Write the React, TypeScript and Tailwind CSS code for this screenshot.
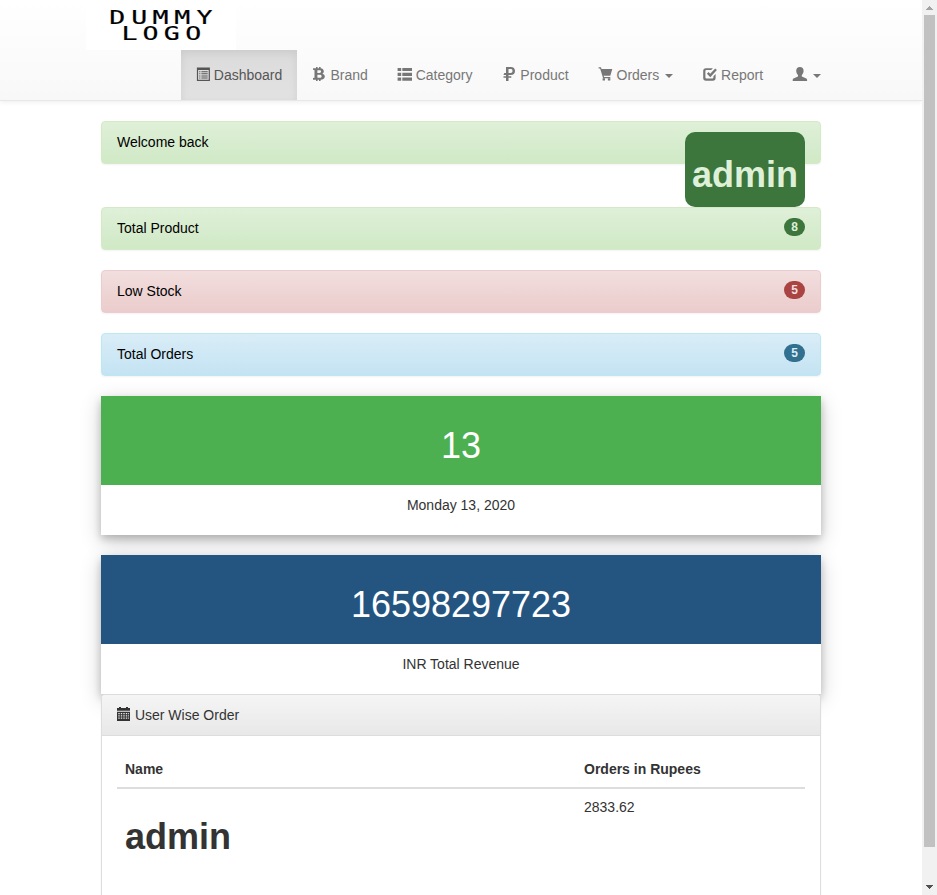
import type { ReactNode } from "react";

function Icon({ children, view = "0 0 15 14" }: { children: ReactNode; view?: string }) {
  return (
    <svg width="15" height="14" viewBox={view} fill="currentColor" className="-mt-0.5 -mr-px shrink-0 overflow-visible">
      {children}
    </svg>
  );
}

const ListAlt = () => (
  <Icon view="0.1 -0.4 15 14">
    <path fillRule="evenodd" d="M1 0H14V13.6H1ZM2.2 2.5V12.4H12.8V2.5Z" />
    <path d="M3.3 3.8h1.2v1H3.3zM5.5 3.8h6.3v1H5.5zM3.3 5.9h1.2v1H3.3zM5.5 5.9h6.3v1H5.5zM3.3 8h1.2v1H3.3zM5.5 8h6.3v1H5.5zM3.3 10.1h1.2v1H3.3zM5.5 10.1h6.3v1H5.5z" />
  </Icon>
);

const Bitcoin = () => (
  <Icon view="1 0 15 14">
    <path
      fillRule="evenodd"
      d="M1 1.2H4V0H5.6V1.2H7V0H8.6V1.3C10.6 1.6 11.8 2.7 11.8 4.3C11.8 5.4 11.3 6.2 10.4 6.7C11.9 7.2 12.8 8.1 12.8 9.5C12.8 11.4 11.3 12.6 8.6 12.7V14H7V12.7H5.6V14H4V12.7H1V11.1L2.5 10.7V3.2L1 2.8ZM5.4 3.3V5.9H7.4C8.5 5.9 9.1 5.4 9.1 4.6C9.1 3.7 8.5 3.3 7.4 3.3ZM5.4 7.7V10.7H7.7C8.9 10.7 9.6 10.2 9.6 9.2C9.6 8.2 8.9 7.7 7.7 7.7Z"
    />
  </Icon>
);

const ThList = () => (
  <Icon view="0.8 0 15 14">
    <path d="M.4 1h3.6v3H.4zM5.1 1h9.7v3H5.1zM.4 5.7h3.6v3.2H.4zM5.1 5.7h9.7v3.2H5.1zM.4 10.5h3.6v3.3H.4zM5.1 10.5h9.7v3.3H5.1z" />
  </Icon>
);

const Ruble = () => (
  <Icon view="-0.3 0 15 14">
    <path
      fillRule="evenodd"
      d="M3.7 0H8.5C11.2 0 12.7 1.4 12.7 3.9C12.7 6.5 11.2 8 8.4 8H6.2V9.2H9V10.8H6.2V14H3.7V10.8H1.2V9.2H3.7V8H1.2L2 6.1H3.7ZM6.2 2.1V6.1H8.2C9.6 6.1 10.2 5.4 10.2 4.1C10.2 2.7 9.6 2.1 8.2 2.1Z"
    />
  </Icon>
);

const Cart = () => (
  <Icon view="0.7 -0.2 15 14">
    <path d="M.3 0H2.6L3.3 1.9H14L12 8.5H5.3L5.8 9.9H12V11.1H4.8L1.8 1.2H.3Z" />
    <path d="M4.3 11h2.4v2.3H4.3zM9.6 11H12v2.3H9.6z" />
  </Icon>
);

const Check = () => (
  <Icon view="0.4 -0.2 15 14">
    <path d="M3.4 1H10.3L8.6 2.9H3.8Q2.8 2.9 2.8 3.9V10.2Q2.8 11.2 3.8 11.2H9.8Q10.8 11.2 10.8 10.2V9L13 6.9V10.8Q13 13.6 10.2 13.6H3.4Q.6 13.6 .6 10.8V3.7Q.6 1 3.4 1Z" />
    <path d="M4.3 6.5L6 4.9L7.6 6.5L12.6 1.2L14.3 2.8L7.7 10.1Z" />
  </Icon>
);

const User = () => (
  <Icon view="0.6 0 15 14">
    <path d="M7.5 0C9.8 0 11.2 1.5 11.2 3.7C11.2 5.5 10.4 7 9.4 7.9V9C9.4 9.4 9.6 9.6 10 9.8L13.4 11.3C14.3 11.7 14.7 12.2 14.7 13V13.9H.3V13C.3 12.2.7 11.7 1.6 11.3L5 9.8C5.4 9.6 5.6 9.4 5.6 9V7.9C4.6 7 3.8 5.5 3.8 3.7C3.8 1.5 5.2 0 7.5 0Z" />
  </Icon>
);

const Calendar = () => (
  <Icon view="1 0 15 14">
    <path d="M1 1H3V0H5V1H10V0H12V1H14V3.7H1Z" />
    <path
      fillRule="evenodd"
      d="M1 4.7H14V13.9H1ZM2.3 6V7.2H3.7V6ZM4.8 6V7.2H6.2V6ZM7.3 6V7.2H8.7V6ZM9.8 6V7.2H11.2V6ZM2.3 8.3V9.5H3.7V8.3ZM4.8 8.3V9.5H6.2V8.3ZM7.3 8.3V9.5H8.7V8.3ZM9.8 8.3V9.5H11.2V8.3ZM2.3 10.6V11.8H3.7V10.6ZM4.8 10.6V11.8H6.2V10.6ZM7.3 10.6V11.8H8.7V10.6ZM9.8 10.6V11.8H11.2V10.6ZM12.1 6V7.2H12.9V6ZM12.1 8.3V9.5H12.9V8.3ZM12.1 10.6V11.8H12.9V10.6Z"
    />
  </Icon>
);

const Caret = () => (
  <span className="ml-0.5 mt-0.5 border-x-4 border-t-4 border-x-transparent border-t-current" />
);

function NavItem({ icon, label, caret, active }: { icon: ReactNode; label?: string; caret?: boolean; active?: boolean }) {
  return (
    <a
      className={`flex h-[50px] items-center gap-[3.9px] px-[15px] ${
        active
          ? "mr-[0.6px] w-[116px] bg-linear-to-b from-[#dbdbdb] to-[#e2e2e2] text-[#555] shadow-[inset_0_3px_9px_rgba(0,0,0,0.075)]"
          : "text-[#777]"
      }`}
    >
      {icon}
      {label && <span>{label}</span>}
      {caret && <Caret />}
    </a>
  );
}

function StatPanel({ label, tone, badge, children }: { label: string; tone: string; badge?: string; children?: ReactNode }) {
  return (
    <div className={`flex h-[43px] items-start justify-between rounded border bg-linear-to-b px-[15px] py-2.5 text-black shadow-[0_1px_2px_rgba(0,0,0,0.05)] ${tone}`}>
      <span>{label}</span>
      {badge ? (
        <span className={`rounded-[10px] px-[7px] py-[3px] text-xs leading-none font-bold ${badge}`}>{children}</span>
      ) : (
        children
      )}
    </div>
  );
}

function Card({ value, caption, color }: { value: string; caption: string; color: string }) {
  return (
    <div className="text-center shadow-[0_4px_8px_0_rgba(0,0,0,0.2),0_6px_20px_0_rgba(0,0,0,0.19)]">
      <div className={`px-2.5 pt-[30px] pb-5 text-4xl leading-[39px] text-white ${color}`}>{value}</div>
      <p className="px-2.5 pt-2.5 pb-5">{caption}</p>
    </div>
  );
}

export default function App() {
  return (
    <div className="flex h-[895px] w-[937px] overflow-hidden bg-white font-['Liberation_Sans',Arial,sans-serif] text-sm leading-5 text-[#333]">
      <main className="w-[922px] shrink-0">
        <nav className="h-[101px] border-b border-[#e7e7e7] bg-linear-to-b from-white to-[#f8f8f8] shadow-[0_1px_5px_rgba(0,0,0,0.075)]">
          <div className="mx-auto w-[750px]">
            <svg width="150" height="50" viewBox="0 0 150 50" className="block bg-white font-['DejaVu_Sans_Mono',monospace]">
              <g transform="scale(1.4 1)" fontSize="19" textAnchor="middle" fill="#000" stroke="#000" strokeWidth="0.2">
                <text x="22.3 38 53.3 68.8 84.7" y="24">DUMMY</text>
                <text x="31 46 61.3 76.6" y="40.2">LOGO</text>
              </g>
            </svg>
            <div className="flex justify-end">
              <NavItem icon={<ListAlt />} label="Dashboard" active />
              <NavItem icon={<Bitcoin />} label="Brand" />
              <NavItem icon={<ThList />} label="Category" />
              <NavItem icon={<Ruble />} label="Product" />
              <NavItem icon={<Cart />} label="Orders" caret />
              <NavItem icon={<Check />} label="Report" />
              <NavItem icon={<User />} caret />
            </div>
          </div>
        </nav>

        <div className="mx-auto mt-5 flex w-[720px] flex-col gap-5">
          <div className="h-[66px]">
            <StatPanel label="Welcome back" tone="border-[#d6e9c6] from-[#dff0d8] to-[#d0e9c6]">
              <h1 className="rounded-[10px] bg-[#3c763d] px-[7px] pt-[23px] pb-[13px] text-4xl leading-[39px] font-bold text-[#dff0d8]">
                admin
              </h1>
            </StatPanel>
          </div>
          <StatPanel label="Total Product" tone="border-[#d6e9c6] from-[#dff0d8] to-[#d0e9c6]" badge="bg-[#3c763d] text-[#dff0d8]">
            8
          </StatPanel>
          <StatPanel label="Low Stock" tone="border-[#ebccd1] from-[#f2dede] to-[#ebcccc]" badge="bg-[#a94442] text-[#f2dede]">
            5
          </StatPanel>
          <StatPanel label="Total Orders" tone="border-[#bce8f1] from-[#d9edf7] to-[#c4e3f3]" badge="bg-[#31708f] text-[#d9edf7]">
            5
          </StatPanel>
          <Card value="13" caption="Monday 13, 2020" color="bg-[#4caf50]" />
          <div>
            <Card value="16598297723" caption="INR Total Revenue" color="bg-[#245580]" />
            <section className="h-[260px] rounded border border-[#ddd] bg-white shadow-[0_1px_2px_rgba(0,0,0,0.05)]">
              <div className="flex h-[41px] items-center gap-[3.9px] rounded-t-[3px] border-b border-[#ddd] bg-linear-to-b from-[#f5f5f5] to-[#e8e8e8] px-[15px]">
                <Calendar />
                <span>User Wise Order</span>
              </div>
              <div className="p-[15px]">
                <table className="w-full table-fixed border-collapse text-left">
                  <thead>
                    <tr className="border-b-2 border-[#ddd]">
                      <th className="w-[459px] p-2 font-bold">Name</th>
                      <th className="p-2 font-bold">Orders in Rupees</th>
                    </tr>
                  </thead>
                  <tbody>
                    <tr className="align-top">
                      <td className="p-2">
                        <h1 className="mt-5 mb-2.5 text-4xl leading-[39px] font-bold">admin</h1>
                      </td>
                      <td className="p-2">2833.62</td>
                    </tr>
                  </tbody>
                </table>
              </div>
            </section>
          </div>
        </div>
      </main>

      <aside className="flex w-[15px] shrink-0 flex-col items-center bg-[#f1f1f1]">
        <svg width="15" height="15" viewBox="0 0 15 15" fill="#a3a3a3" shapeRendering="crispEdges">
          <path d="M4 10h7V9h-1V8H9V7H8V6H7v1H6v1H5v1H4z" />
        </svg>
        <div className="h-[832px] w-[11px] bg-[#c1c1c1]" />
        <svg width="15" height="15" viewBox="0 0 15 15" fill="#505050" shapeRendering="crispEdges" className="mt-[33px]">
          <path d="M4 5h7v1h-1v1H9v1H8v1H7V8H6V7H5V6H4z" />
        </svg>
      </aside>
    </div>
  );
}
